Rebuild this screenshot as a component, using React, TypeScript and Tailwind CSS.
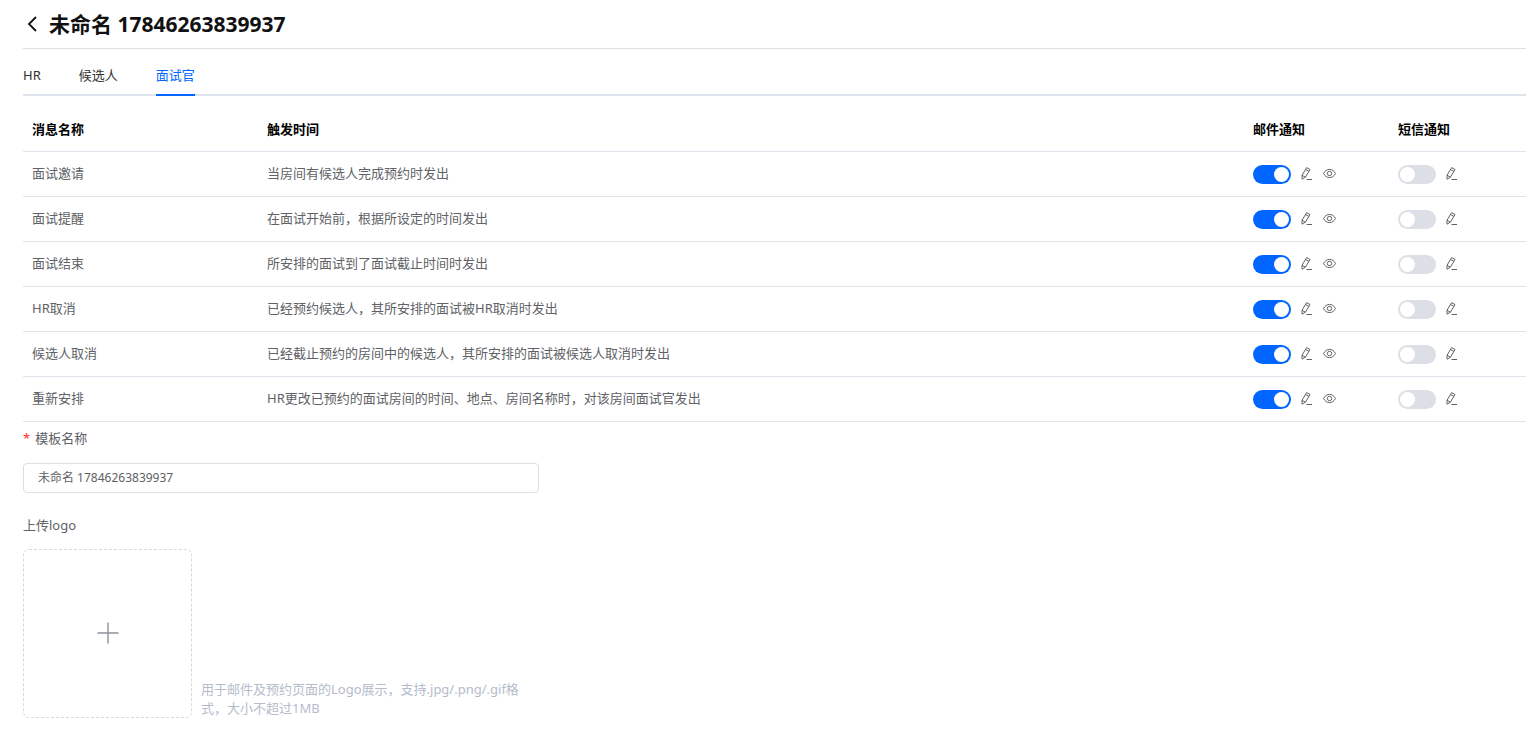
import { useState } from 'react'

type Message = {
  name: string
  trigger: string
}

const tabs = ['HR', '候选人', '面试官']

const messages: Message[] = [
  { name: '面试邀请', trigger: '当房间有候选人完成预约时发出' },
  { name: '面试提醒', trigger: '在面试开始前，根据所设定的时间发出' },
  { name: '面试结束', trigger: '所安排的面试到了面试截止时间时发出' },
  { name: 'HR取消', trigger: '已经预约候选人，其所安排的面试被HR取消时发出' },
  { name: '候选人取消', trigger: '已经截止预约的房间中的候选人，其所安排的面试被候选人取消时发出' },
  { name: '重新安排', trigger: 'HR更改已预约的面试房间的时间、地点、房间名称时，对该房间面试官发出' },
]

function PencilIcon() {
  return (
    <svg width="14" height="13" viewBox="0 0 14 13" fill="none" stroke="currentColor" strokeLinejoin="round">
      <path d="M6.6 0.6L10 2.5L5.4 10.2L2 12.2V8.3Z" />
      <path d="M5.5 2.5L8.9 4.4M2 8.3L5.4 10.2M6.5 12.5h5.5" />
    </svg>
  )
}

function EyeIcon() {
  return (
    <svg width="13" height="13" viewBox="0 0 13 13" fill="none" stroke="currentColor">
      <path d="M0.5 6.5C2 3.8 4 2.4 6.5 2.4S11 3.8 12.5 6.5C11 9.2 9 10.6 6.5 10.6S2 9.2 0.5 6.5Z" />
      <circle cx="6.5" cy="6.5" r="2.2" />
    </svg>
  )
}

function Switch({ label, defaultChecked = false }: { label: string; defaultChecked?: boolean }) {
  return (
    <input
      type="checkbox"
      role="switch"
      aria-label={label}
      defaultChecked={defaultChecked}
      className="h-[19px] w-[38px] cursor-pointer appearance-none rounded-full bg-[#dcdfe6] p-[2px] transition-colors before:block before:size-[15px] before:rounded-full before:bg-white before:transition-transform checked:bg-[#0066ff] checked:before:translate-x-[19px]"
    />
  )
}

export default function App() {
  const [activeTab, setActiveTab] = useState('面试官')
  const [templateName, setTemplateName] = useState('未命名 17846263839937')

  return (
    <main className="bg-white pl-[23px] font-['Noto_Sans','Noto_Sans_CJK_SC',sans-serif] text-[13px] leading-[19px] text-[#606266]">
      <header className="flex h-[49px] items-center gap-2 border-b border-[#dcdfe6] text-[#111]">
        <button type="button" aria-label="返回" className="flex w-[18px] cursor-pointer justify-center">
          <svg width="12" height="18" viewBox="0 0 12 18" fill="none" stroke="currentColor" strokeWidth="1.8">
            <path d="M10 2L3 9L10 16" />
          </svg>
        </button>
        <h1 className="text-[21px] leading-7 font-bold">{templateName}</h1>
      </header>

      {/* Recipient tabs */}
      <nav className="mt-2 flex h-[39px] gap-[38px] border-b-2 border-[#dfe4ed]">
        {tabs.map((tab) => (
          <button
            key={tab}
            type="button"
            onClick={() => setActiveTab(tab)}
            className={`-mb-[2px] cursor-pointer border-b-2 ${
              activeTab === tab ? 'border-[#0066ff] text-[#0066ff]' : 'border-transparent text-[#303133]'
            }`}
          >
            {tab}
          </button>
        ))}
      </nav>

      {/* Notification settings */}
      <table className="mt-[13px] w-full table-fixed border-collapse text-left">
        <thead>
          <tr className="h-[42px] border-b border-[#dfe4ed] text-black">
            <th className="w-[235px] px-[9px] font-bold">消息名称</th>
            <th className="px-[9px] font-bold">触发时间</th>
            <th className="w-[145px] px-[9px] font-bold">邮件通知</th>
            <th className="w-[137px] px-[9px] font-bold">短信通知</th>
          </tr>
        </thead>
        <tbody>
          {messages.map((message) => (
            <tr key={message.name} className="h-[45px] border-b border-[#dfe4ed]">
              <td className="px-[9px]">{message.name}</td>
              <td className="px-[9px]">{message.trigger}</td>
              <td className="px-[9px]">
                <div className="flex items-start gap-[9px] pt-[2px]">
                  <Switch label={`${message.name}邮件通知`} defaultChecked />
                  <button type="button" aria-label="编辑邮件" className="cursor-pointer py-[2px]">
                    <PencilIcon />
                  </button>
                  <button type="button" aria-label="预览邮件" className="cursor-pointer py-[2px]">
                    <EyeIcon />
                  </button>
                </div>
              </td>
              <td className="px-[9px]">
                <div className="flex items-start gap-[9px] pt-[2px]">
                  <Switch label={`${message.name}短信通知`} />
                  <button type="button" aria-label="编辑短信" className="cursor-pointer py-[2px]">
                    <PencilIcon />
                  </button>
                </div>
              </td>
            </tr>
          ))}
        </tbody>
      </table>

      <form className="mt-[7px] w-[516px]" onSubmit={(e) => e.preventDefault()}>
        <label htmlFor="template-name" className="block">
          <span className="mr-[5px] text-[#ff2d2d]">*</span>
          模板名称
        </label>
        <input
          id="template-name"
          type="text"
          value={templateName}
          onChange={(e) => setTemplateName(e.target.value)}
          className="mt-[15px] block h-[30px] w-full rounded border border-[#dcdfe6] px-[14px] pb-[2px] text-xs outline-none focus:border-[#0066ff]"
        />

        <label htmlFor="logo-file" className="mt-[23px] block">
          上传logo
        </label>
        <div className="mt-[14px] flex items-end gap-[9px]">
          <label
            htmlFor="logo-file"
            className="flex size-[169px] shrink-0 cursor-pointer items-center justify-center rounded-md border border-dashed border-[#d9d9d9] text-[#8c939d]"
          >
            <input id="logo-file" type="file" accept=".jpg,.png,.gif" className="sr-only" />
            <svg width="22" height="22" viewBox="0 0 22 22" fill="none" stroke="currentColor" strokeWidth="1.4">
              <path d="M11 0.5v21M0.5 11h21" />
            </svg>
          </label>
          <p className="text-[#b4bccc]">用于邮件及预约页面的Logo展示，支持.jpg/.png/.gif格式，大小不超过1MB</p>
        </div>
      </form>
    </main>
  )
}
